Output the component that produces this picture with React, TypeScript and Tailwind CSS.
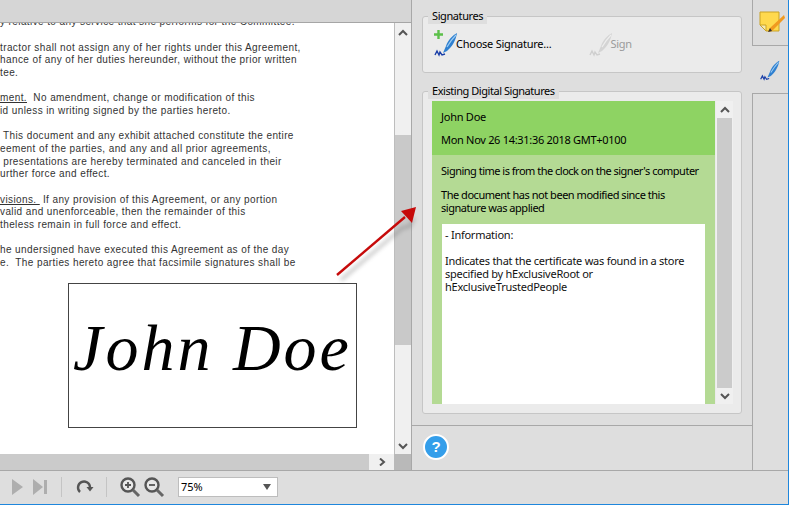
const Pen = ({ faded = false, size = 26 }: { faded?: boolean; size?: number }) => (
  <svg width={size} height={size} viewBox="0 0 26 26" className="shrink-0">
    <path d="M24 2 C20 4 15 9 13 15 L10 22 L14 20 C19 16 23 9 24 2Z" fill={faded ? "#d4d4d4" : "#2f80d0"} />
    <path d="M23 4 C20 7 17 11 14 16" stroke={faded ? "#eeeeee" : "#9ccbf2"} strokeWidth="1.2" fill="none" />
    <path d="M2 24 L4 20 L6 24 L7 21 L9 24 L12 23" stroke={faded ? "#cfcfcf" : "#1a3fa8"} strokeWidth="1.4" fill="none" />
  </svg>
);

const Chevron = ({ dir }: { dir: "up" | "down" | "right" }) => (
  <svg width="10" height="8" viewBox="0 0 10 8">
    <path
      d={dir === "up" ? "M1 6 L5 2 L9 6" : dir === "down" ? "M1 2 L5 6 L9 2" : "M3 0.5 L7 4 L3 7.5"}
      stroke="#555"
      strokeWidth="2"
      fill="none"
    />
  </svg>
);

const docFont = "font-['Liberation_Sans',sans-serif] text-[10px] leading-[12.7px] tracking-[0.4px] text-[#333] whitespace-pre";

const ZoomIcon = ({ plus }: { plus: boolean }) => (
  <svg width="22" height="22" viewBox="0 0 22 22">
    <circle cx="9" cy="9" r="6.5" stroke="#555" strokeWidth="2.4" fill="#e8e8e8" />
    <path d="M14 14 L20 20" stroke="#666" strokeWidth="3" />
    <path d={plus ? "M6 9 H12 M9 6 V12" : "M6 9 H12"} stroke="#555" strokeWidth="1.8" />
  </svg>
);

export default function App() {
  return (
    <div className="w-[789px] h-[505px] overflow-hidden bg-[#dedede] flex flex-col border-r border-b border-[#1e86dc] font-['Noto_Sans',sans-serif] relative">
      <div className="flex h-[470px] shrink-0">
        <div className="w-[411px] flex flex-col shrink-0">
          <div className="h-[23px] bg-[#d6d6d6] border-b border-[#a6a6a6] shrink-0" />
          <div className="flex-1 flex min-h-0">
            <div className="w-[394px] bg-white overflow-hidden shrink-0">
              <div className={`${docFont} mt-[-7px]`}>y relative to any service that she performs for the Committee.</div>
              <div className={`${docFont} mt-[13px]`}>tractor shall not assign any of her rights under this Agreement,</div>
              <div className={docFont}>hance of any of her duties hereunder, without the prior written</div>
              <div className={docFont}>tee.</div>
              <div className={`${docFont} mt-[12.5px]`}><span className="underline">ment.</span>  No amendment, change or modification of this</div>
              <div className={docFont}>id unless in writing signed by the parties hereto.</div>
              <div className={`${docFont} mt-[12.5px]`}> This document and any exhibit attached constitute the entire</div>
              <div className={docFont}>eement of the parties, and any and all prior agreements,</div>
              <div className={docFont}> presentations are hereby terminated and canceled in their</div>
              <div className={docFont}>urther force and effect.</div>
              <div className={`${docFont} mt-[12.5px]`}><span className="underline">visions. </span> If any provision of this Agreement, or any portion</div>
              <div className={docFont}>valid and unenforceable, then the remainder of this</div>
              <div className={docFont}>theless remain in full force and effect.</div>
              <div className={`${docFont} mt-[12.5px]`}>he undersigned have executed this Agreement as of the day</div>
              <div className={docFont}>e.  The parties hereto agree that facsimile signatures shall be</div>
              <div className="ml-[68px] mt-[13px] w-[289px] h-[145px] border border-[#444] flex items-center justify-center overflow-hidden">
                <span className="font-['Liberation_Serif',serif] italic text-[66px] leading-none text-black tracking-[3px] whitespace-nowrap mb-[14px]">John Doe</span>
              </div>
            </div>
            <div className="w-[17px] bg-[#f0f0f0] border-l border-[#bdbdbd] flex flex-col items-center">
              <div className="h-[16px] flex items-center justify-center mt-[2px]"><Chevron dir="up" /></div>
              <div className="h-[94px]" />
              <div className="h-[210px] w-full bg-[#c9c9c9]" />
              <div className="flex-1" />
              <div className="h-[17px] flex items-center justify-center"><Chevron dir="down" /></div>
            </div>
          </div>
          <div className="h-[16px] flex shrink-0">
            <div className="flex-1 bg-[#cbcbcb]" />
            <div className="w-[25px] bg-[#f0f0f0] flex items-center justify-center"><Chevron dir="right" /></div>
            <div className="w-[17px] bg-[#b9b9b9]" />
          </div>
        </div>

        <div className="w-[342px] border-l border-r border-[#a8a8a8] flex flex-col shrink-0 text-[11px] tracking-[-0.25px] text-black">
          <div className="h-[426px] border-b border-[#a8a8a8] px-[10px] pt-[16px] shrink-0">
            <div className="relative h-[57px] bg-[#ebebeb] border border-[#c6c6c6] rounded-[3px] flex items-center pl-[10px] pb-[1px]">
              <span className="absolute left-[5px] top-[-9px] bg-[#dedede] px-[4px] leading-[16px] tracking-[-0.4px]">Signatures</span>
              <div className="relative flex items-center">
                <svg width="9" height="9" viewBox="0 0 9 9" className="absolute left-[1px] top-[-1px]">
                  <path d="M4.5 0 V9 M0 4.5 H9" stroke="#5cc04a" strokeWidth="2.4" />
                </svg>
                <Pen />
                <span className="ml-[-3px]">Choose Signature...</span>
              </div>
              <div className="flex items-center ml-[37px] text-[#9a9a9a]">
                <Pen faded />
                <span className="ml-[-4px]">Sign</span>
              </div>
            </div>
            <div className="relative mt-[18px] h-[323px] bg-[#ebebeb] border border-[#c6c6c6] rounded-[3px] pl-[9px] pt-[9px]">
              <span className="absolute left-[5px] top-[-9px] bg-[#dedede] px-[4px] leading-[16px] tracking-[-0.45px]">Existing Digital Signatures</span>
              <div className="flex h-[303px]">
                <div className="w-[283px] flex flex-col">
                  <div className="h-[54px] bg-[#8ed363] pl-[9px] pt-[8px] leading-[16px] shrink-0">
                    <div className="mb-[7px]">John Doe</div>
                    <div className="tracking-[-0.3px]">Mon Nov 26 14:31:36 2018 GMT+0100</div>
                  </div>
                  <div className="flex-1 bg-[#b4da94] px-[9px] pt-[8px] flex flex-col min-h-0">
                    <div className="leading-[16px] whitespace-nowrap tracking-[-0.5px]">Signing time is from the clock on the signer's computer</div>
                    <div className="leading-[13px] mt-[9px] tracking-[-0.47px]">The document has not been modified since this signature was applied</div>
                    <div className="mt-[10px] mx-px flex-1 bg-white px-[3px] pt-[4px] leading-[13px] text-[#111]">
                      <div>- Information:</div>
                      <div className="mt-[13px]">Indicates that the certificate was found in a store specified by hExclusiveRoot or hExclusiveTrustedPeople</div>
                    </div>
                  </div>
                </div>
                <div className="w-[17px] ml-px bg-[#f0f0f0] flex flex-col items-center">
                  <div className="h-[17px] flex items-center justify-center"><Chevron dir="up" /></div>
                  <div className="w-[15px] h-[270px] bg-[#cbcbcb]" />
                  <div className="flex-1 flex items-center justify-center"><Chevron dir="down" /></div>
                </div>
              </div>
            </div>
          </div>
          <div className="flex-1 pl-[11px] pt-[8px]">
            <div className="w-[26px] h-[26px] rounded-full bg-[#349eea] border-2 border-white flex items-center justify-center text-white font-bold text-[15px] font-['Liberation_Sans',sans-serif]">?</div>
          </div>
        </div>

        <div className="flex-1 flex flex-col ml-[-1px]">
          <div className="h-[46px] border-b border-l border-[#a8a8a8] flex items-center justify-center bg-[#dcdcdc]">
            <svg width="28" height="28" viewBox="-2 -1 28 28">
              <path d="M1 2 H20 V21 H7 L1 15Z" fill="#ffd94d" stroke="#c9a227" />
              <path d="M1 15 H7 V21Z" fill="#f4e9b0" stroke="#c9a227" />
              <path d="M25 5 L11 18 L9 22 L13 21 L26 8Z" fill="#f09a20" />
              <path d="M9 22 L11 18 L13 21Z" fill="#333" />
            </svg>
          </div>
          <div className="h-[47px] bg-[#dedede] flex items-center justify-center relative">
            <Pen size={22} />
          </div>
          <div className="flex-1 border-t border-l border-[#a8a8a8]" />
        </div>
      </div>

      <div className="flex-1 border-t border-[#a8a8a8] flex items-center pl-[12px] pb-[1px]">
        <svg width="11" height="16" viewBox="0 0 11 16" className="shrink-0"><path d="M0 0 L11 8 L0 16Z" fill="#aeaeae" /></svg>
        <svg width="14" height="16" viewBox="0 0 14 16" className="ml-[10px] shrink-0"><path d="M0 0 L10 8 L0 16Z M11 1 H14 V15 H11Z" fill="#aeaeae" /></svg>
        <div className="w-px h-[20px] bg-[#c4c4c4] ml-[14px]" />
        <svg width="18" height="18" viewBox="0 0 18 18" className="ml-[14px] shrink-0">
          <path d="M4 14 A6 6 0 1 1 14 9" stroke="#555" strokeWidth="2.4" fill="none" />
          <path d="M10.5 9 H17.5 L14 13.5Z" fill="#555" />
        </svg>
        <div className="w-px h-[20px] bg-[#c4c4c4] ml-[12px]" />
        <div className="ml-[12px] flex items-center gap-[2px]">
          <ZoomIcon plus />
          <ZoomIcon plus={false} />
        </div>
        <div className="ml-[13px] w-[100px] h-[20px] bg-white border border-[#bdbdbd] flex items-center justify-between pl-[2px] pr-[6px] text-[11px] text-black">
          <span>75%</span>
          <svg width="8" height="6" viewBox="0 0 8 6"><path d="M0 0 H8 L4 6Z" fill="#555" /></svg>
        </div>
      </div>

      <svg width="100" height="90" viewBox="0 0 100 90" className="absolute left-[330px] top-[200px] pointer-events-none">
        <path d="M11 80 L72 28 L80 26 L84 18" stroke="#555" strokeWidth="3" opacity="0.35" fill="none" className="blur-[2px]" />
        <path d="M7 75 L75 17" stroke="#c60a0a" strokeWidth="2.4" />
        <path d="M86 7 L71 11 L82 23Z" fill="#c60a0a" />
      </svg>
    </div>
  );
}
